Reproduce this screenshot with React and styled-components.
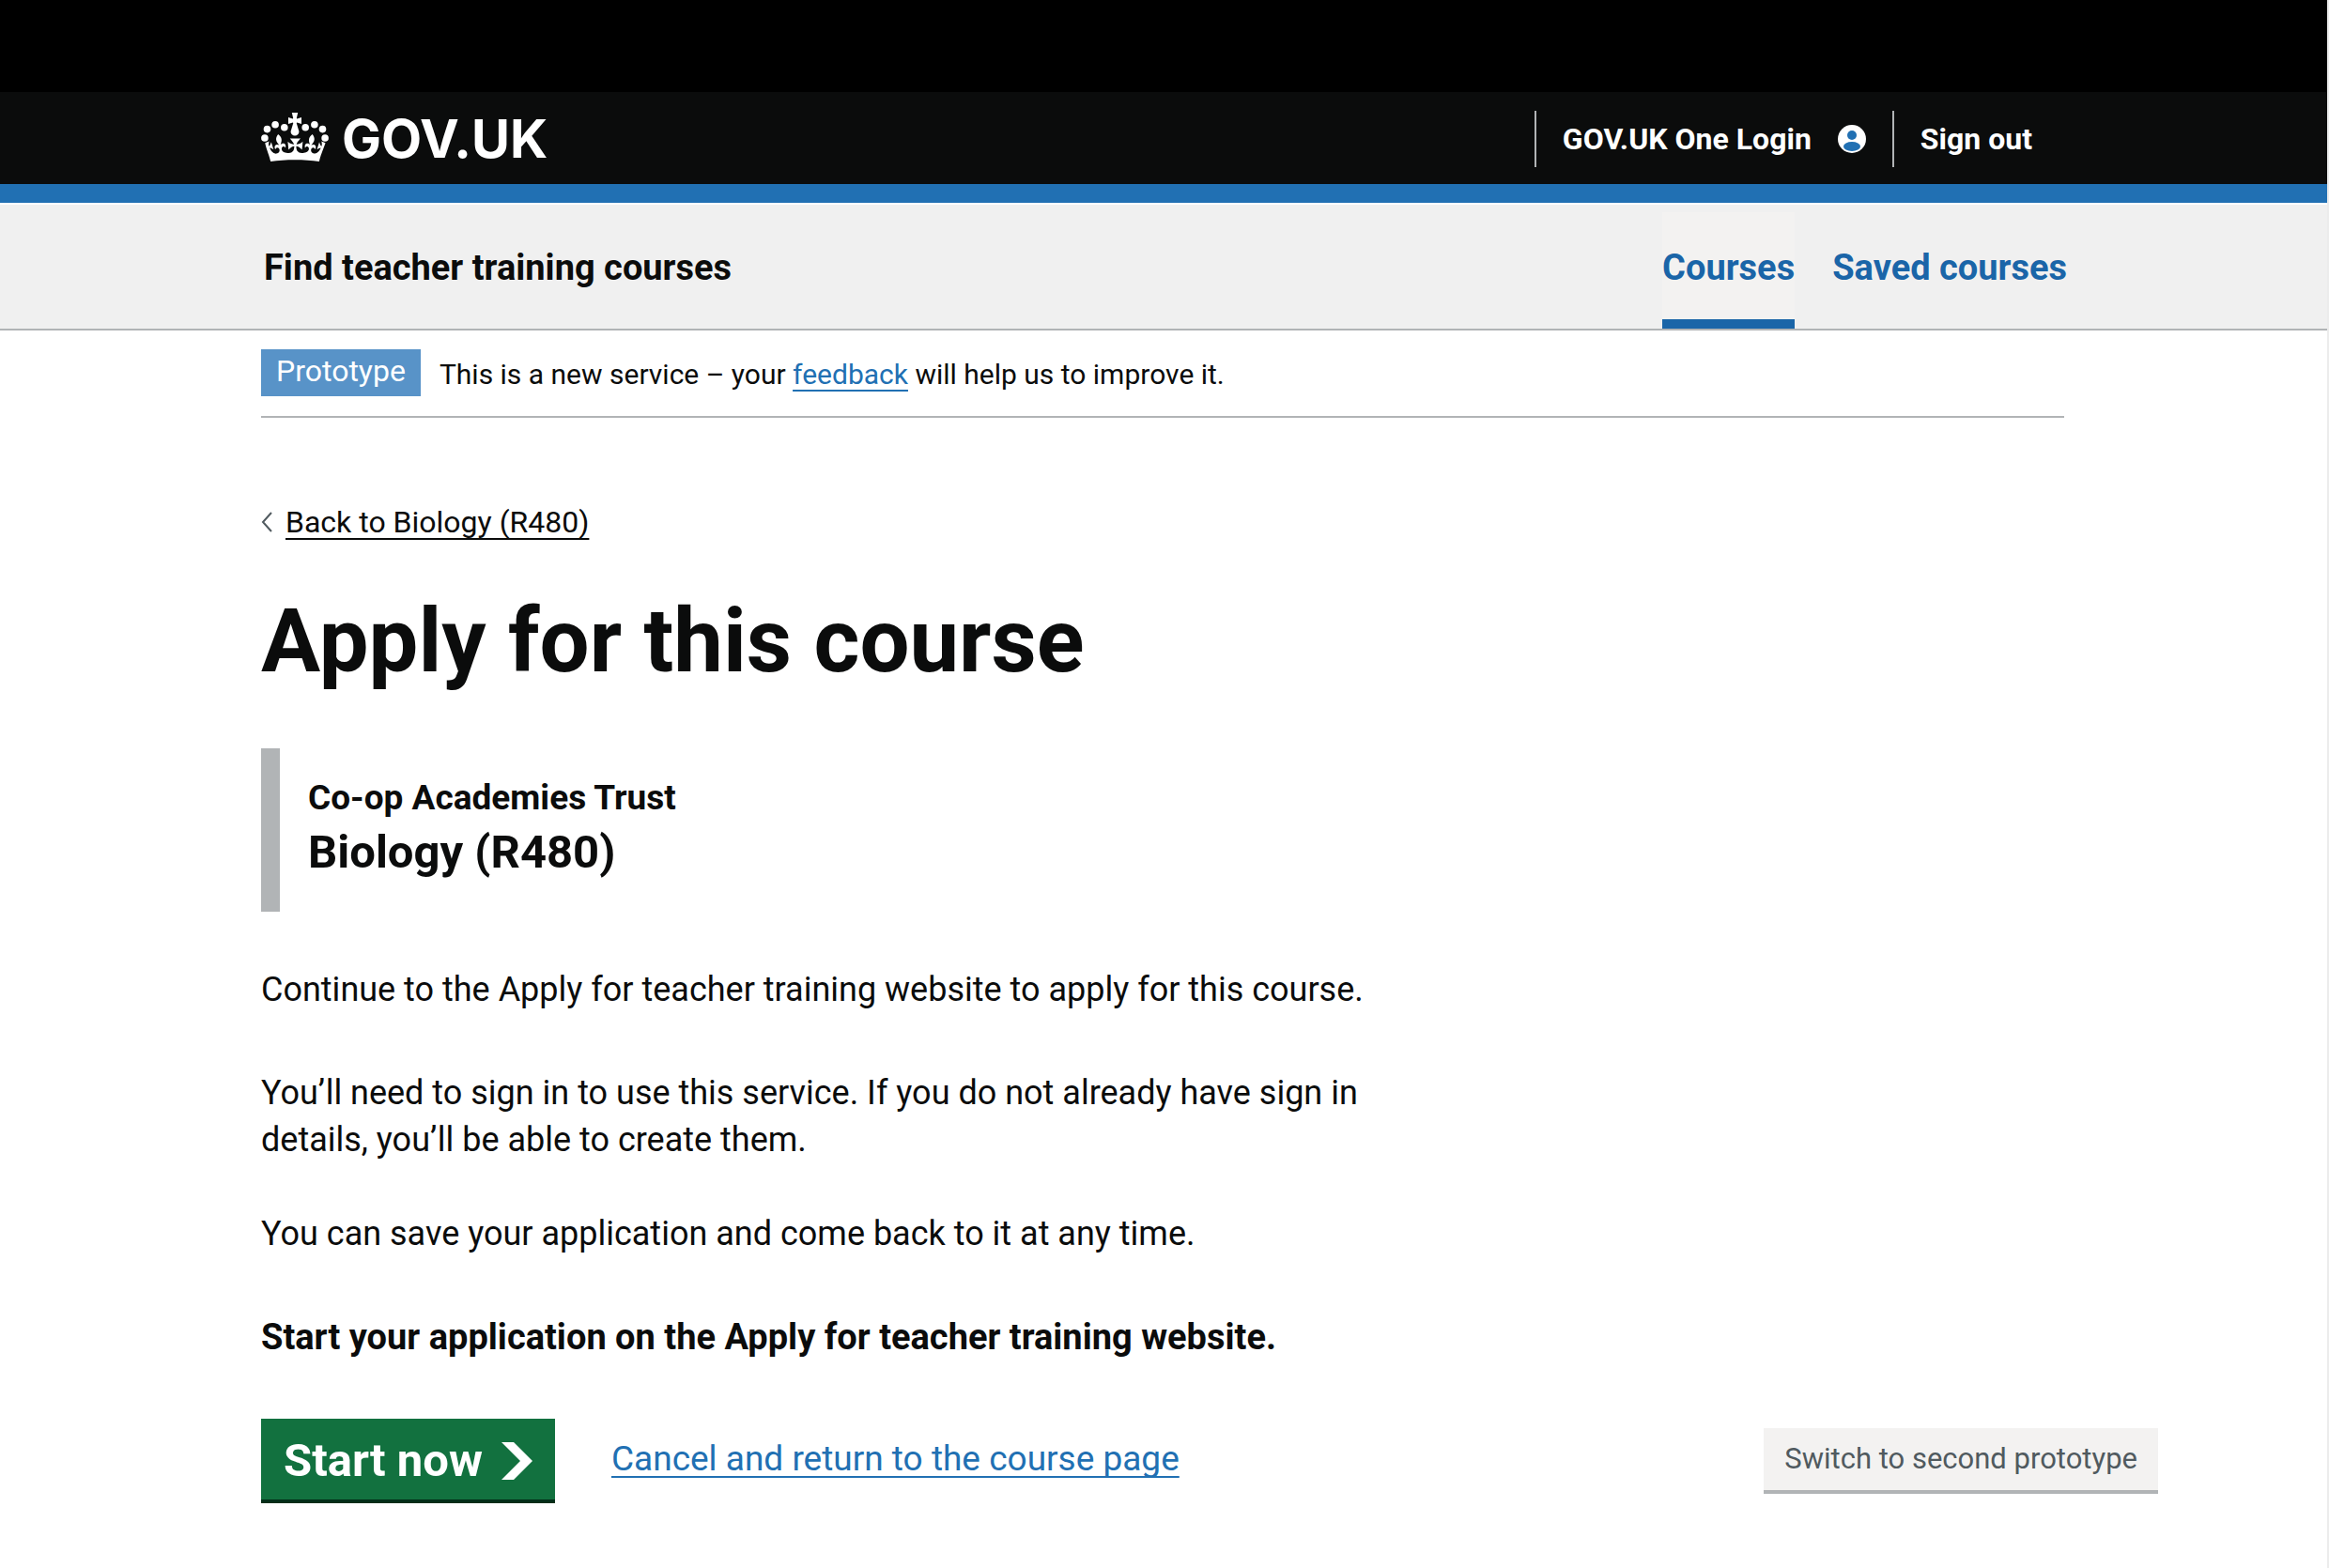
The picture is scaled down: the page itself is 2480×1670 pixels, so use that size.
import React from "react";
import styled, { createGlobalStyle, css } from "styled-components";

const color = {
  ink: "#0b0c0c",
  blue: "#2170b3",
  darkBlue: "#1a65a8",
  tag: "#5893c8",
  rule: "#b1b4b6",
  edge: "#ececec",
  grey: "#f0f0f0",
  lightGrey: "#f3f2f1",
  secondary: "#505a5f",
  green: "#12713f",
  darkGreen: "#042e19",
};

const GlobalStyle = createGlobalStyle`
  *, *::before, *::after { box-sizing: border-box; }
  body {
    margin: 0;
    background: #fff;
    color: ${color.ink};
    font-family: Roboto, "Liberation Sans", sans-serif;
    font-size: 36px;
    line-height: 50px;
  }
`;

const Page = styled.div`
  min-height: 100vh;
  border-right: 2px solid ${color.edge};
`;

const Container = styled.div`
  max-width: 1920px;
  margin: 0 auto;
`;

const TopBar = styled.div`
  height: 98px;
  background: #000;
`;

const Header = styled.header`
  padding-right: 2px;
  background: ${color.ink};
  border-bottom: 20px solid ${color.blue};
`;

const HeaderRow = styled(Container)`
  display: flex;
  align-items: center;
  justify-content: space-between;
  height: 98px;
  padding-top: 2px;
`;

const HomeLink = styled.a`
  display: flex;
  align-items: center;
  gap: 14px;
  color: #fff;
  font-family: Inter, sans-serif;
  font-size: 56px;
  font-weight: 700;
  line-height: 60px;
  text-decoration: none;
`;

const AccountNav = styled.nav`
  display: flex;
  padding-right: 6px;
`;

const AccountLink = styled.a`
  display: flex;
  align-items: center;
  gap: 28px;
  height: 60px;
  padding: 0 28px;
  border-left: 2px solid ${color.rule};
  color: #fff;
  font-size: 32px;
  font-weight: 700;
  text-decoration: none;
`;

const ServiceBar = styled.div`
  margin-top: 2px;
  background: ${color.grey};
  border-bottom: 2px solid ${color.rule};
`;

const ServiceRow = styled(Container)`
  display: flex;
  justify-content: space-between;
  max-width: 1924px;
  padding: 8px 0 0 4px;
  font-size: 38px;
  font-weight: 700;
`;

const ServiceName = styled.span`
  padding: 34px 0 40px;
`;

const ServiceNav = styled.nav`
  display: flex;
  gap: 40px;
`;

const ServiceLink = styled.a`
  padding: 34px 0 30px;
  border-bottom: 10px solid ${(p) => (p.$current ? color.darkBlue : "transparent")};
  background: ${(p) => (p.$current ? color.lightGrey : "none")};
  color: ${color.darkBlue};
  text-decoration: none;
`;

const Body = styled.div`
  padding-right: 2px;
`;

const PhaseBanner = styled.div`
  display: flex;
  align-items: flex-start;
  gap: 20px;
  padding: 20px 0 17px;
  border-bottom: 2px solid ${color.rule};
  font-size: 30px;
  line-height: 54px;
`;

const Tag = styled.strong`
  padding: 0 16px 4px;
  background: ${color.tag};
  color: #fff;
  font-size: 32px;
  font-weight: 400;
  line-height: 46px;
`;

const underlined = css`
  text-decoration: underline;
  text-decoration-thickness: 2px;
  text-underline-offset: 6px;
  text-decoration-skip-ink: none;
`;

const Link = styled.a`
  ${underlined}
  color: ${color.blue};
`;

const CancelLink = styled(Link)`
  font-size: 37px;
`;

const BackLink = styled.a`
  display: inline-flex;
  align-items: center;
  gap: 14px;
  margin-top: 86px;
  color: ${color.ink};
  font-size: 32px;
  text-decoration: none;
`;

const BackText = styled.span`
  ${underlined}
`;

const Title = styled.h1`
  margin: 52px 0 64px;
  font-size: 94px;
  font-weight: 700;
  line-height: 100px;
`;

const Inset = styled.h2`
  margin: 0 0 58px;
  padding: 25px 30px 33px;
  border-left: 20px solid ${color.rule};
  font-size: 37px;
  font-weight: 700;
  line-height: 56px;
`;

const CourseName = styled.span`
  display: block;
  font-size: 49px;
  line-height: 60px;
`;

const Copy = styled.div`
  display: grid;
  gap: 60px;
  max-width: 1240px;
`;

const TextGroup = styled.div`
  display: grid;
  gap: 50px;
`;

const Paragraph = styled.p`
  margin: 0;
`;

const Strong = styled(Paragraph)`
  font-size: 38px;
  font-weight: 700;
`;

const Actions = styled.div`
  display: flex;
  align-items: center;
  gap: 60px;
  margin: 62px -100px 0 0;
`;

const StartButton = styled.button`
  display: flex;
  align-items: center;
  gap: 20px;
  height: 86px;
  padding: 4px 24px 0;
  border: 0;
  background: ${color.green};
  box-shadow: 0 4px 0 ${color.darkGreen};
  color: #fff;
  font: 700 49px/56px Roboto, "Liberation Sans", sans-serif;
`;

const SwitchButton = styled.button`
  height: 66px;
  margin-left: auto;
  padding: 0 22px;
  border: 0;
  background: ${color.lightGrey};
  box-shadow: 0 4px 0 ${color.rule};
  color: ${color.secondary};
  font: 400 31px/50px Roboto, "Liberation Sans", sans-serif;
`;

const Icon = styled.svg`
  display: block;
  flex: none;
`;

const beads = [
  [3.9, 27], [6.5, 17.6], [15.1, 12.7], [24.8, 15.8],
  [47.2, 15.8], [56.9, 12.7], [65.5, 17.6], [68.1, 27],
];

function Crown() {
  return (
    <Icon width="72" height="56" viewBox="0 0 72 56" fill="#fff" aria-hidden="true">
      {beads.map(([x, y]) => (
        <circle key={x} cx={x} cy={y} r="3.8" />
      ))}
      <path d="M32.8 0h6.4l-1.4 5.9 .5 .6 4.7-1.4v6.8l-4.7-1.5-.6 .5 2.2 7.4c.3 .8.5 1.4.5 2.1a4.4 4.2 0 0 1-8.8 0c0-.7.2-1.3.5-2.1l2.2-7.4-.6-.5-4.7 1.5V5.100l4.700 1.400.5-.6z" />
      <path
        transform="translate(2.4 -9) scale(2.1 2.03)"
        d="M16 29.2c4.4 0 8.6.3 12.300.8 1.100-4.500 2.400-7 3.200-9.700l-2-.9c.2 1.300.3 1.900 0 2.700-.4-.4-.8-1.100-1.100-2.300l-1.200 4c.7-.5 1.300-.8 2-.9-1.100 2.500-2.600 3.100-3.500 3-1.100-.2-1.700-1.200-1.500-2.100.3-1.200 1.500-1.500 2.100-.1 1.100-2.300-.8-3-2-2.300 1.900-1.900 2.100-3.500.6-5.600-2.100 1.600-2.100 3.200-1.200 5.500-1.200-1.400-3.200-.6-2.500 1.600.9-1.400 2.100-.5 1.900.8-.2 1.100-1.700 2.100-3.500 1.900-2.700-.2-2.900-2.100-2.900-3.600.7-.1 1.900.5 2.900 1.900l.4-4.300c-1.100 1.100-2.100 1.400-3.200 1.400.4-1.200 2.100-3 2.100-3h-5.400s1.700 1.900 2.100 3c-1.100 0-2.100-.2-3.200-1.400l.4 4.300c1-1.400 2.200-2 2.900-1.900-.1 1.500-.2 3.400-2.900 3.600-1.900.2-3.400-.8-3.500-1.900-.2-1.300 1-2.200 1.900-.8.7-2.300-1.200-3-2.500-1.600.9-2.200.9-3.900-1.200-5.500-1.500 2-1.300 3.700.6 5.600-1.200-.7-3.100 0-2 2.300.6-1.400 1.800-1.100 2.100.1.2.9-.3 1.900-1.500 2.100-.9.2-2.400-.5-3.500-3 .6 0 1.200.3 2 .9l-1.200-4c-.3 1.100-.7 1.900-1.100 2.300-.3-.8-.2-1.400 0-2.700l-2 .9C1.300 23 2.600 25.500 3.700 30c3.700-.5 7.900-.8 12.300-.8z"
      />
    </Icon>
  );
}

function UserIcon() {
  return (
    <Icon width="30" height="30" viewBox="0 0 30 30" aria-hidden="true">
      <circle cx="15" cy="15" r="15" fill="#fff" />
      <circle cx="15" cy="11" r="5" fill={color.blue} />
      <ellipse cx="15" cy="23" rx="9" ry="5" fill={color.blue} />
    </Icon>
  );
}

export default function App() {
  return (
    <Page>
      <GlobalStyle />
      <TopBar />
      <Header>
        <HeaderRow>
          <HomeLink href="#">
            <Crown />
            GOV.UK
          </HomeLink>
          <AccountNav aria-label="Account">
            <AccountLink href="#">
              GOV.UK One Login
              <UserIcon />
            </AccountLink>
            <AccountLink href="#">Sign out</AccountLink>
          </AccountNav>
        </HeaderRow>
      </Header>

      <ServiceBar>
        <ServiceRow>
          <ServiceName>Find teacher training courses</ServiceName>
          <ServiceNav aria-label="Service">
            <ServiceLink href="#" $current aria-current="page">Courses</ServiceLink>
            <ServiceLink href="#">Saved courses</ServiceLink>
          </ServiceNav>
        </ServiceRow>
      </ServiceBar>

      <Body>
        <Container>
          <PhaseBanner>
            <Tag>Prototype</Tag>
            <span>
              This is a new service – your <Link href="#">feedback</Link> will help us to improve it.
            </span>
          </PhaseBanner>

          <BackLink href="#">
            <Icon width="12" height="22" viewBox="0 0 12 22" fill="none" stroke={color.secondary} strokeWidth="2" aria-hidden="true">
              <path d="M11 1 2 11l9 10" />
            </Icon>
            <BackText>Back to Biology (R480)</BackText>
          </BackLink>

          <main>
            <Title>Apply for this course</Title>
            <Inset>
              Co-op Academies Trust
              <CourseName>Biology (R480)</CourseName>
            </Inset>
            <Copy>
              <Paragraph>
                Continue to the Apply for teacher training website to apply for this course.
              </Paragraph>
              <TextGroup>
                <Paragraph>
                  You’ll need to sign in to use this service. If you do not already have sign in
                  details, you’ll be able to create them.
                </Paragraph>
                <Paragraph>You can save your application and come back to it at any time.</Paragraph>
              </TextGroup>
              <Strong>Start your application on the Apply for teacher training website.</Strong>
            </Copy>
            <Actions>
              <StartButton type="button">
                Start now
                <Icon width="33" height="40" viewBox="0 0 33 40" fill="#fff" aria-hidden="true">
                  <path d="M0 0h13l20 20-20 20H0l20-20z" />
                </Icon>
              </StartButton>
              <CancelLink href="#">Cancel and return to the course page</CancelLink>
              <SwitchButton type="button">Switch to second prototype</SwitchButton>
            </Actions>
          </main>
        </Container>
      </Body>
    </Page>
  );
}
